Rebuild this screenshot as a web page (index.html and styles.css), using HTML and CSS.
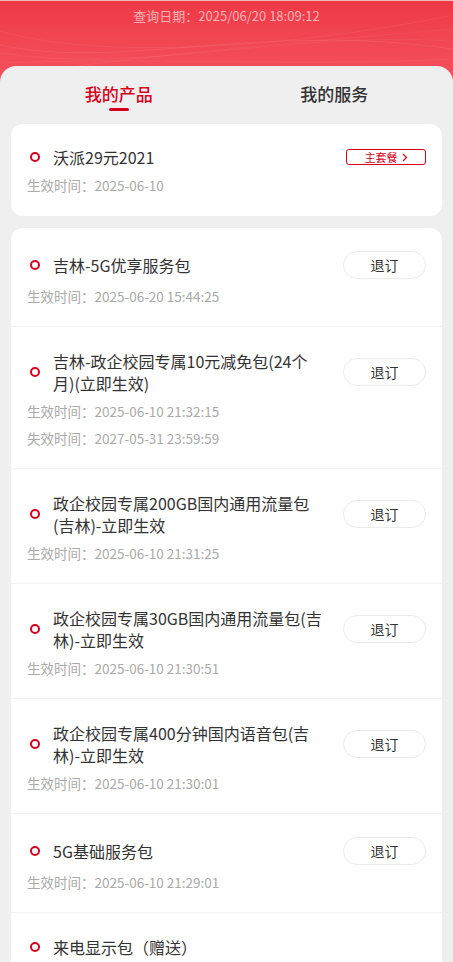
FILE: index.html
```html
<!DOCTYPE html>
<html lang="zh-CN">
<head>
    <meta charset="UTF-8">
    <title>我的产品</title>
    <link rel="stylesheet" href="styles.css">
</head>
<body>
<div class="page">
    <div class="head">
        <svg class="waves" width="453" height="80" viewBox="0 0 453 80" fill="none">
            <path d="M0 44 C120 70 260 20 453 48" stroke="#fff" stroke-opacity=".08"/>
            <path d="M0 52 C140 74 280 30 453 40" stroke="#fff" stroke-opacity=".06"/>
            <path d="M0 30 C100 60 300 46 453 14" stroke="#fff" stroke-opacity=".06"/>
            <path d="M40 70 C180 50 320 40 453 28" stroke="#fff" stroke-opacity=".05"/>
            <path d="M0 62 C160 56 300 66 453 58" stroke="#fff" stroke-opacity=".05"/>
        </svg>
        <p class="date">查询日期：2025/06/20 18:09:12</p>
    </div>

    <div class="panel">
        <div class="tabs">
            <div class="tab active">我的产品<i></i></div>
            <div class="tab">我的服务</div>
        </div>

        <div class="card main">
            <div class="row">
                <span class="ring"></span>
                <span class="name">沃派29元2021</span>
                <span class="badge">主套餐<svg width="6" height="9" viewBox="0 0 6 9"><path d="M1 1l3.5 3.5L1 8" stroke="#d6001c" stroke-width="1.2" fill="none"/></svg></span>
            </div>
            <p class="sub">生效时间：2025-06-10</p>
        </div>

        <div class="card list">
            <div class="item">
                <div class="row">
                    <span class="ring"></span>
                    <span class="name">吉林-5G优享服务包</span>
                    <span class="btn">退订</span>
                </div>
                <p class="sub">生效时间：2025-06-20 15:44:25</p>
            </div>
            <div class="item">
                <div class="row">
                    <span class="ring"></span>
                    <span class="name">吉林-政企校园专属10元减免包(24个月)(立即生效)</span>
                    <span class="btn">退订</span>
                </div>
                <p class="sub">生效时间：2025-06-10 21:32:15</p>
                <p class="sub">失效时间：2027-05-31 23:59:59</p>
            </div>
            <div class="item">
                <div class="row">
                    <span class="ring"></span>
                    <span class="name">政企校园专属200GB国内通用流量包(吉林)-立即生效</span>
                    <span class="btn">退订</span>
                </div>
                <p class="sub">生效时间：2025-06-10 21:31:25</p>
            </div>
            <div class="item">
                <div class="row">
                    <span class="ring"></span>
                    <span class="name">政企校园专属30GB国内通用流量包(吉林)-立即生效</span>
                    <span class="btn">退订</span>
                </div>
                <p class="sub">生效时间：2025-06-10 21:30:51</p>
            </div>
            <div class="item">
                <div class="row">
                    <span class="ring"></span>
                    <span class="name">政企校园专属400分钟国内语音包(吉林)-立即生效</span>
                    <span class="btn">退订</span>
                </div>
                <p class="sub">生效时间：2025-06-10 21:30:01</p>
            </div>
            <div class="item">
                <div class="row">
                    <span class="ring"></span>
                    <span class="name">5G基础服务包</span>
                    <span class="btn">退订</span>
                </div>
                <p class="sub">生效时间：2025-06-10 21:29:01</p>
            </div>
            <div class="item">
                <div class="row">
                    <span class="ring"></span>
                    <span class="name">来电显示包（赠送）</span>
                </div>
                <p class="sub">生效时间：2025-06-10 21:29:01</p>
            </div>
        </div>
    </div>
</div>
</body>
</html>
```

FILE: styles.css
```css
* {
    padding: 0;
    margin: 0;
    box-sizing: border-box;
}

body {
    font-family: "Noto Sans CJK SC", "Noto Sans", sans-serif;
    background: #efefef;
    color: #333;
}

.page {
    background: linear-gradient(180deg, #ee3945 0%, #f34a57 60%, #f5525f 100%) no-repeat top / 100% 90px;
    min-height: 962px;
}

/* 顶部 */
.head {
    position: relative;
    height: 66px;
    border-top: 1px solid #f6b9bd;
    overflow: hidden;
}

.waves {
    position: absolute;
    top: 0;
    left: 0;
}

.date {
    position: relative;
    padding-top: 6px;
    line-height: 18px;
    font-size: 13px;
    text-align: center;
    color: rgba(255, 255, 255, .6);
}

/* 内容区 */
.panel {
    background: #efefef;
    border-radius: 16px 16px 0 0;
    padding: 0 11px;
}

.tabs {
    display: flex;
    height: 58px;
}

.tab {
    flex: 1;
    display: flex;
    flex-direction: column;
    align-items: center;
    padding-top: 18px;
    font-size: 17px;
    line-height: 20px;
    font-weight: 500;
    color: #333;
}

.tab.active {
    color: #d6001c;
}

.tab i {
    width: 20px;
    height: 3px;
    margin-top: 4px;
    border-radius: 2px;
    background: #d6001c;
}

.card {
    background: #fff;
    border-radius: 12px;
}

.card.main {
    padding: 22px 16px 17px;
    margin-bottom: 12px;
}

.item {
    padding: 23px 16px 16px;
    border-bottom: 1px solid #f2f2f2;
}

.row {
    display: flex;
    align-items: center;
    min-height: 22px;
}

.ring {
    flex: none;
    width: 10px;
    height: 10px;
    margin: 0 13px 0 3px;
    border: 2.2px solid #d6001c;
    border-radius: 50%;
}

.name {
    flex: 1;
    font-size: 16px;
    line-height: 22px;
    color: #333;
}

.btn {
    flex: none;
    width: 83px;
    height: 28px;
    margin-left: 17px;
    border: 1px solid #ebebeb;
    border-radius: 14px;
    font-size: 14px;
    line-height: 26px;
    text-align: center;
    color: #333;
}

.badge {
    flex: none;
    display: flex;
    align-items: center;
    justify-content: center;
    gap: 4px;
    width: 80px;
    height: 16px;
    border: 1.3px solid #d6001c;
    border-radius: 3px;
    font-size: 11px;
    line-height: 14px;
    color: #d6001c;
}

.sub {
    margin-top: 4px;
    font-size: 13.5px;
    line-height: 27px;
    color: #aaa;
}

.sub + .sub {
    margin-top: 0;
}
```
